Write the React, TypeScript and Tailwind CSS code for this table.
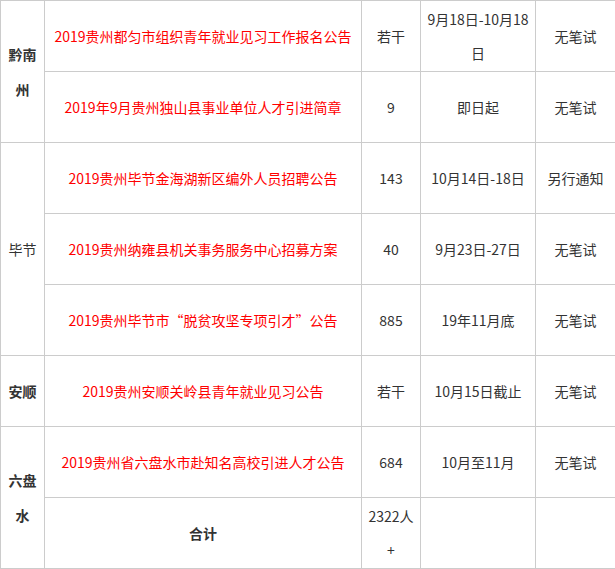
type Row = {
  region?: { name: string; span: number; bold: boolean };
  title: string;
  titleBold?: boolean;
  red?: boolean;
  count: string;
  date: string;
  exam: string;
};

const rows: Row[] = [
  {
    region: { name: '黔南州', span: 2, bold: true },
    title: '2019贵州都匀市组织青年就业见习工作报名公告',
    red: true,
    count: '若干',
    date: '9月18日-10月18日',
    exam: '无笔试',
  },
  {
    title: '2019年9月贵州独山县事业单位人才引进简章',
    red: true,
    count: '9',
    date: '即日起',
    exam: '无笔试',
  },
  {
    region: { name: '毕节', span: 3, bold: false },
    title: '2019贵州毕节金海湖新区编外人员招聘公告',
    red: true,
    count: '143',
    date: '10月14日-18日',
    exam: '另行通知',
  },
  {
    title: '2019贵州纳雍县机关事务服务中心招募方案',
    red: true,
    count: '40',
    date: '9月23日-27日',
    exam: '无笔试',
  },
  {
    title: '2019贵州毕节市“脱贫攻坚专项引才”公告',
    red: true,
    count: '885',
    date: '19年11月底',
    exam: '无笔试',
  },
  {
    region: { name: '安顺', span: 1, bold: true },
    title: '2019贵州安顺关岭县青年就业见习公告',
    red: true,
    count: '若干',
    date: '10月15日截止',
    exam: '无笔试',
  },
  {
    region: { name: '六盘水', span: 2, bold: true },
    title: '2019贵州省六盘水市赴知名高校引进人才公告',
    red: true,
    count: '684',
    date: '10月至11月',
    exam: '无笔试',
  },
  {
    title: '合计',
    titleBold: true,
    count: '2322人+',
    date: '',
    exam: '',
  },
];

const cell = 'border border-[#cccccc] px-[6px] text-center align-middle leading-[34px]';

export default function App() {
  return (
    <div className="w-[615px] bg-white text-[14px] text-[#333333] font-['Microsoft_YaHei','Noto_Sans_CJK_SC',sans-serif]">
      <table className="w-[615px] table-fixed border-collapse">
        <colgroup>
          <col className="w-[44px]" />
          <col className="w-[317px]" />
          <col className="w-[59px]" />
          <col className="w-[115px]" />
          <col className="w-[80px]" />
        </colgroup>
        <tbody>
          {rows.map((r, i) => (
            <tr key={i} className="h-[71px]">
              {r.region && (
                <td
                  rowSpan={r.region.span}
                  className={`border border-[#cccccc] px-[2px] text-center align-middle leading-[35px] ${r.region.bold ? 'font-bold' : ''}`}
                >
                  {r.region.name}
                </td>
              )}
              <td
                className={`${cell} ${r.red ? 'text-[#ff0000]' : ''} ${r.titleBold ? 'font-bold' : ''}`}
              >
                {r.title}
              </td>
              <td className={cell}>{r.count}</td>
              <td className={cell}>{r.date}</td>
              <td className={cell}>{r.exam}</td>
            </tr>
          ))}
        </tbody>
      </table>
    </div>
  );
}
